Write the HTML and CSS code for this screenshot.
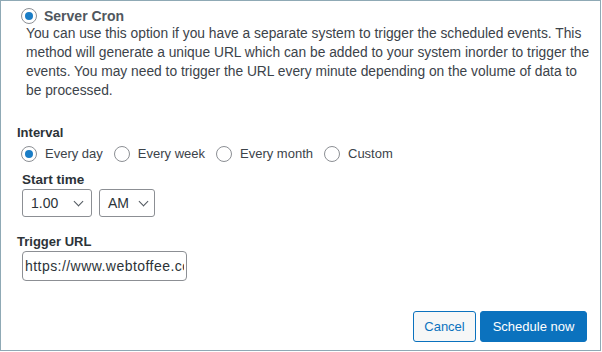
FILE: index.html
```
<!DOCTYPE html>
<html lang="en">

<head>
    <meta charset="UTF-8">
    <title>Schedule export</title>
    <link rel="stylesheet" href="styles.css">
</head>

<body>
    <div class="panel">
        <div class="option">
            <div class="radio-item head">
                <span class="radio checked"></span>
                <span class="head-title">Server Cron</span>
            </div>
            <p class="desc">You can use this option if you have a separate system to trigger the scheduled events. This method will generate a unique URL which can be added to your system inorder to trigger the events. You may need to trigger the URL every minute depending on the volume of data to be processed.</p>
        </div>

        <div class="field-label">Interval</div>
        <div class="radios">
            <div class="radio-item"><span class="radio checked"></span>Every day</div>
            <div class="radio-item"><span class="radio"></span>Every week</div>
            <div class="radio-item"><span class="radio"></span>Every month</div>
            <div class="radio-item"><span class="radio"></span>Custom</div>
        </div>

        <div class="field-label sub">Start time</div>
        <div class="selects">
            <div class="select hour">1.00<span class="chev"></span></div>
            <div class="select ampm">AM<span class="chev"></span></div>
        </div>

        <div class="field-label url-label">Trigger URL</div>
        <input class="url-input" type="text" value="https://www.webtoffee.com/wp-admin/cron-trigger">

        <div class="actions">
            <button class="btn btn-secondary">Cancel</button>
            <button class="btn btn-primary">Schedule now</button>
        </div>
    </div>
</body>

</html>
```
FILE: styles.css
```
body {
    margin: 0;
    font-family: 'Liberation Sans', Arial, sans-serif;
    font-size: 13px;
    color: #3c434a;
    background: #fff;
}

.panel {
    box-sizing: border-box;
    width: 601px;
    height: 351px;
    border: 1px solid #8fa9b5;
    padding: 7px 13px 8px 16px;
    display: flex;
    flex-direction: column;
}

.radio-item {
    display: flex;
    align-items: center;
    gap: 8px;
    line-height: 19px;
    color: #3c434a;
}

.radio {
    box-sizing: border-box;
    width: 16px;
    height: 16px;
    border: 1px solid #8c8f94;
    border-radius: 50%;
    display: flex;
    align-items: center;
    justify-content: center;
    flex-shrink: 0;
}

.radio.checked::after {
    content: '';
    width: 8px;
    height: 8px;
    border-radius: 50%;
    background: #1a7dc6;
}

.head {
    margin-left: 4px;
    gap: 7px;
    height: 16px;
}

.head-title {
    font-size: 14px;
    font-weight: bold;
    color: #50575e;
}

.desc {
    margin: 0 -8px 0 9px;
    font-size: 13.8px;
    line-height: 19px;
    color: #3c434a;
}

.field-label {
    font-weight: bold;
    line-height: 19px;
    color: #2c3338;
    margin-top: 23px;
}

.radios {
    display: flex;
    gap: 11px;
    margin: 2px 0 0 4px;
}

.sub {
    margin: 7px 0 0 5px;
    font-size: 13.5px;
}

.selects {
    display: flex;
    gap: 7px;
    margin-left: 5px;
}

.select {
    box-sizing: border-box;
    height: 28px;
    border: 1px solid #8c8f94;
    border-radius: 3px;
    display: flex;
    align-items: center;
    justify-content: space-between;
    font-size: 14px;
    color: #2c3338;
}

.select.hour {
    width: 70px;
    padding: 0 9px 0 8px;
}

.select.ampm {
    width: 56px;
    padding: 0 7px 0 8px;
}

.chev {
    width: 6px;
    height: 6px;
    border-right: 1.5px solid #50575e;
    border-bottom: 1.5px solid #50575e;
    transform: rotate(45deg);
    margin-top: -4px;
}

.url-label {
    margin-top: 15px;
}

.url-input {
    box-sizing: border-box;
    width: 165px;
    height: 30px;
    margin: 0 0 0 5px;
    padding: 0 2px;
    border: 1px solid #8c8f94;
    border-radius: 4px;
    font-family: 'Liberation Sans', Arial, sans-serif;
    font-size: 14px;
    letter-spacing: 0.45px;
    color: #2c3338;
    outline: none;
}

.actions {
    margin-top: auto;
    display: flex;
    justify-content: flex-end;
    gap: 4px;
}

.btn {
    box-sizing: border-box;
    height: 31px;
    border-radius: 3px;
    font-family: 'Liberation Sans', Arial, sans-serif;
    font-size: 13px;
    padding: 0 10px;
    cursor: pointer;
}

.btn-secondary {
    width: 63px;
    background: #f6f7f7;
    border: 1px solid #0b72be;
    color: #0b72be;
}

.btn-primary {
    width: 107px;
    background: #0b72be;
    border: 1px solid #0b72be;
    color: #fff;
}
```
